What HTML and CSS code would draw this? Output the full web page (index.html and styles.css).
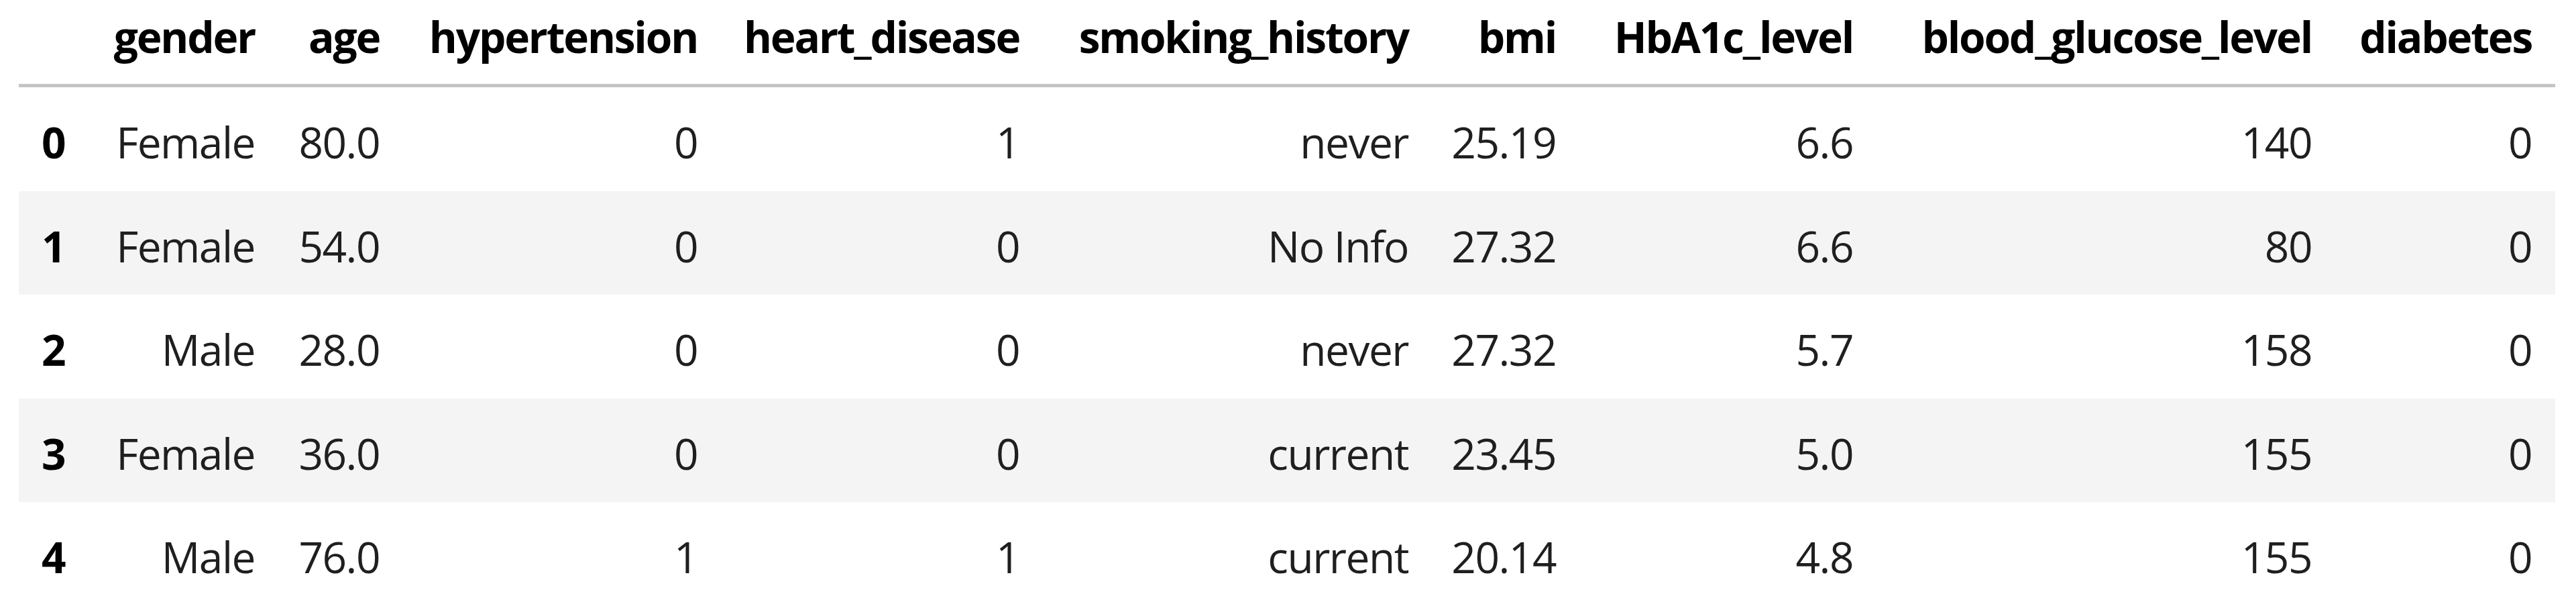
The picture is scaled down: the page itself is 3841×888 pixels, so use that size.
FILE: index.html
```html
<!DOCTYPE html>
<html lang="en">
<head>
<meta charset="utf-8">
<title>DataFrame</title>
<link rel="stylesheet" href="styles.css">
</head>
<body>
<div class="output">
<table class="dataframe">
  <colgroup>
    <col class="c-idx">
    <col class="c-gender">
    <col class="c-age">
    <col class="c-hyp">
    <col class="c-heart">
    <col class="c-smoke">
    <col class="c-bmi">
    <col class="c-hba">
    <col class="c-glu">
    <col class="c-dia">
  </colgroup>
  <thead>
    <tr>
      <th></th>
      <th>gender</th>
      <th>age</th>
      <th>hypertension</th>
      <th>heart_disease</th>
      <th>smoking_history</th>
      <th>bmi</th>
      <th>HbA1c_level</th>
      <th>blood_glucose_level</th>
      <th>diabetes</th>
    </tr>
  </thead>
  <tbody>
    <tr>
      <th>0</th><td>Female</td><td>80.0</td><td>0</td><td>1</td><td>never</td><td>25.19</td><td>6.6</td><td>140</td><td>0</td>
    </tr>
    <tr>
      <th>1</th><td>Female</td><td>54.0</td><td>0</td><td>0</td><td>No Info</td><td>27.32</td><td>6.6</td><td>80</td><td>0</td>
    </tr>
    <tr>
      <th>2</th><td>Male</td><td>28.0</td><td>0</td><td>0</td><td>never</td><td>27.32</td><td>5.7</td><td>158</td><td>0</td>
    </tr>
    <tr>
      <th>3</th><td>Female</td><td>36.0</td><td>0</td><td>0</td><td>current</td><td>23.45</td><td>5.0</td><td>155</td><td>0</td>
    </tr>
    <tr>
      <th>4</th><td>Male</td><td>76.0</td><td>1</td><td>1</td><td>current</td><td>20.14</td><td>4.8</td><td>155</td><td>0</td>
    </tr>
  </tbody>
</table>
</div>
</body>
</html>
```
FILE: styles.css
```css
html, body {
  margin: 0;
  padding: 0;
  background: #ffffff;
}

.output {
  padding-left: 28px;
}

.dataframe {
  border-collapse: collapse;
  border-spacing: 0;
  table-layout: fixed;
  width: 3782px;
  font-family: "Open Sans", "Noto Sans", "Liberation Sans", sans-serif;
  font-size: 64px;
  line-height: 64px;
  letter-spacing: -1.5px;
  color: #1f1f1f;
}

.c-idx { width: 104px; }
.c-gender { width: 283px; }
.c-age { width: 186px; }
.c-hyp { width: 474px; }
.c-heart { width: 480px; }
.c-smoke { width: 580px; }
.c-bmi { width: 220px; }
.c-hba { width: 443px; }
.c-glu { width: 684px; }
.c-dia { width: 328px; }

.dataframe th,
.dataframe td {
  text-align: right;
  white-space: nowrap;
  vertical-align: top;
  padding: 50px 35px 40.5px 0;
}

.dataframe th {
  font-weight: 700;
  color: #000000;
}

.dataframe thead th {
  letter-spacing: -2.2px;
  padding: 23px 35px 38px 0;
  border-bottom: 5px solid #c4c4c4;
}

.dataframe tbody tr:nth-child(odd) {
  background: #ffffff;
}

.dataframe tbody tr:nth-child(even) {
  background: #f4f4f4;
}
```
